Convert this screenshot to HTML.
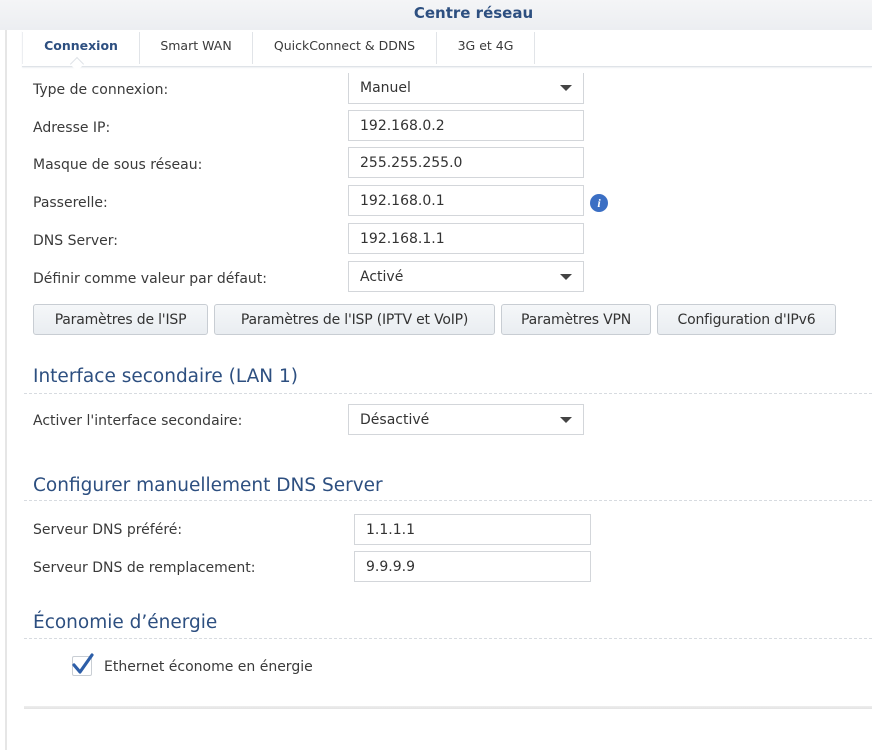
<!DOCTYPE html>
<html><head><meta charset="utf-8"><style>
*{box-sizing:border-box;margin:0;padding:0}
body{width:872px;height:750px;background:#fff;font-family:"DejaVu Sans",sans-serif;font-size:14px;color:#3a3a3a;position:relative;overflow:hidden}
.title{position:absolute;left:0;top:0;width:872px;height:30px;background:linear-gradient(#f4f5f7,#eceef1);text-align:center;font-weight:bold;color:#2d4f80;font-size:15px;line-height:26px;padding-left:75px}
.vline{position:absolute;left:5px;top:30px;width:2px;height:720px;background:#e6e6e6}
.tabs{position:absolute;left:22px;top:30px;width:850px;height:37px;border-bottom:1px solid #dfe3e8;box-shadow:0 1px 1px #eef0f3}
.tab{position:absolute;top:2px;height:32px;line-height:28px;text-align:center;font-size:12.5px;color:#3a3a3a;border-right:1px solid #e1e4e8}
.abs{position:absolute}
.lbl{position:absolute;left:33px;font-size:14px;line-height:18px}
.inp{position:absolute;height:31px;border:1px solid #d3d6da;background:#fff;padding-left:11px;line-height:31px;font-size:14px;color:#333}
.arr{position:absolute;right:11px;top:12px;width:0;height:0;border-left:6px solid transparent;border-right:6px solid transparent;border-top:6px solid #444}
.btn{position:absolute;top:304px;height:31px;border:1px solid #c8cdd3;border-radius:3px;background:linear-gradient(#f5f7f9,#e9edf1);text-align:center;line-height:30px;font-size:14px;color:#333;white-space:nowrap;letter-spacing:-0.2px}
.h{position:absolute;left:33px;font-size:18.5px;color:#2d4f80}
.dash{position:absolute;left:24px;width:848px;border-top:1px dashed #d7dbe0}
</style></head><body>
<div class="title">Centre réseau</div>
<div class="vline"></div>
<div class="tabs">
<div class="tab" style="left:0;width:118px;font-weight:bold;color:#2d4f80;border-left:1px solid #eceef1">Connexion</div>
<div class="tab" style="left:118px;width:113px">Smart WAN</div>
<div class="tab" style="left:231px;width:184px">QuickConnect &amp; DDNS</div>
<div class="tab" style="left:415px;width:98px">3G et 4G</div>
</div>
<div class="abs" style="left:72px;top:59px;width:10px;height:10px;background:#fff;border-left:1px solid #dfe3e8;border-top:1px solid #dfe3e8;transform:rotate(45deg)"></div>

<div class="lbl" style="top:81px">Type de connexion:</div>
<div class="inp" style="left:348px;top:73px;width:236px;border-top:none">Manuel<div class="arr"></div></div>
<div class="lbl" style="top:119px">Adresse IP:</div>
<div class="inp" style="left:348px;top:110px;width:236px">192.168.0.2</div>
<div class="lbl" style="top:156px">Masque de sous réseau:</div>
<div class="inp" style="left:348px;top:147px;width:236px">255.255.255.0</div>
<div class="lbl" style="top:194px">Passerelle:</div>
<div class="inp" style="left:348px;top:185px;width:236px">192.168.0.1</div>
<div class="abs" style="left:590px;top:194px;width:18px;height:18px;border-radius:50%;background:#3b6fc4;color:#fff;font:bold italic 12px 'Liberation Serif',serif;text-align:center;line-height:18px">i</div>
<div class="lbl" style="top:232px">DNS Server:</div>
<div class="inp" style="left:348px;top:223px;width:236px">192.168.1.1</div>
<div class="lbl" style="top:270px">Définir comme valeur par défaut:</div>
<div class="inp" style="left:348px;top:261px;width:236px">Activé<div class="arr"></div></div>

<div class="btn" style="left:33px;width:175px">Paramètres de l'ISP</div>
<div class="btn" style="left:214px;width:281px">Paramètres de l'ISP (IPTV et VoIP)</div>
<div class="btn" style="left:501px;width:150px">Paramètres VPN</div>
<div class="btn" style="left:657px;width:179px">Configuration d'IPv6</div>

<div class="h" style="top:366px">Interface secondaire (LAN 1)</div>
<div class="dash" style="top:393px"></div>
<div class="lbl" style="top:412px">Activer l'interface secondaire:</div>
<div class="inp" style="left:348px;top:404px;width:236px">Désactivé<div class="arr"></div></div>

<div class="h" style="top:475px">Configurer manuellement DNS Server</div>
<div class="dash" style="top:500px"></div>
<div class="lbl" style="top:521px">Serveur DNS préféré:</div>
<div class="inp" style="left:354px;top:514px;width:237px">1.1.1.1</div>
<div class="lbl" style="top:559px">Serveur DNS de remplacement:</div>
<div class="inp" style="left:354px;top:551px;width:237px">9.9.9.9</div>

<div class="h" style="top:612px">Économie d’énergie</div>
<div class="dash" style="top:638px"></div>
<div class="abs" style="left:72px;top:656px;width:20px;height:20px;border:1px solid #c9ced4;border-radius:2px;background:#fff"></div>
<svg class="abs" style="left:70px;top:652px" width="26" height="24" viewBox="0 0 26 24"><path d="M4 13 L10 20 L22 3" fill="none" stroke="#2d5ea8" stroke-width="3.2" stroke-linecap="round" stroke-linejoin="round"/></svg>
<div class="lbl" style="left:104px;top:658px">Ethernet économe en énergie</div>

<div class="abs" style="left:24px;top:706px;width:848px;height:3px;background:linear-gradient(#eeeeee,#e3e3e3)"></div>
</body></html>
